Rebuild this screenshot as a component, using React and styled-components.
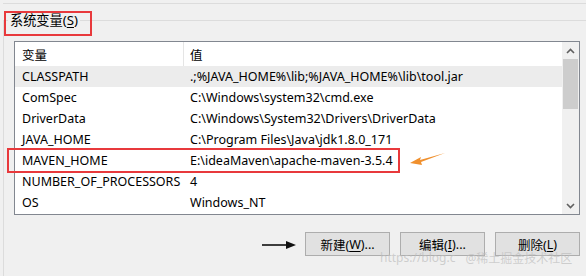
import React from "react";
import styled, { createGlobalStyle } from "styled-components";

const GlobalStyle = createGlobalStyle`
  body {
    margin: 0;
    background: #f0f0f0;
    font-family: "Noto Sans", "Noto Sans CJK SC", sans-serif;
    color: #000;
  }
`;

const Page = styled.div`
  position: relative;
  width: 586px;
  height: 276px;
  overflow: hidden;
  background: #f0f0f0;
  font-size: 12.5px;
`;

const TopRule = styled.div`
  height: 3px;
  border-bottom: 1px solid #dcdcdc;
  margin-left: 3px;
`;

const Group = styled.div`
  margin-top: 16px;
  margin-left: 3px;
  border-top: 1px solid #dcdcdc;
  border-left: 1px solid #dcdcdc;
  padding-left: 10px;
  height: 260px;
`;

const LegendRow = styled.div`
  height: 8px;
`;

const Legend = styled.div`
  display: inline-block;
  margin-top: -9px;
  margin-left: -6px;
  padding: 0 2px;
  background: #f0f0f0;
  line-height: 17px;
  font-size: 13.2px;
  vertical-align: top;
`;

const U = styled.span`
  text-decoration: underline;
  text-underline-offset: 2px;
`;

const ListBox = styled.div`
  display: flex;
  margin-top: 12px;
  width: 564px;
  height: 172px;
  border: 1px solid #828790;
  background: #fff;
`;

const Table = styled.div`
  flex: 1;
  display: flex;
  flex-direction: column;
`;

const Row = styled.div`
  display: grid;
  grid-template-columns: 169px 1fr;
  height: ${(p) => (p.$header ? "24px" : "21px")};
  align-items: center;
  background: ${(p) => (p.$selected ? "#ececec" : "#fff")};
  white-space: nowrap;
  overflow: hidden;
`;

const Cell = styled.div`
  padding-left: ${(p) => (p.$first ? "7px" : "6px")};
  border-right: ${(p) => (p.$divider ? "1px solid #e5e5e5" : "none")};
  height: 100%;
  display: flex;
  align-items: center;
`;

const Scrollbar = styled.div`
  width: 17px;
  display: flex;
  flex-direction: column;
  background: #f0f0f0;
`;

const ArrowBtn = styled.div`
  height: 17px;
  display: flex;
  align-items: center;
  justify-content: center;
`;

const Thumb = styled.div`
  height: 50px;
  margin: 0 1px;
  background: #cdcdcd;
`;

const Track = styled.div`
  flex: 1;
`;

const ButtonRow = styled.div`
  display: flex;
  justify-content: flex-end;
  align-items: center;
  gap: 10px;
  width: 566px;
  margin-top: 17px;
`;

const Button = styled.div`
  width: 83px;
  height: 22px;
  border: 1px solid #adadad;
  background: #e1e1e1;
  display: flex;
  align-items: center;
  justify-content: center;
  font-size: 12.5px;
`;

const Mark = styled.div`
  position: absolute;
  left: ${(p) => p.$x}px;
  top: ${(p) => p.$y}px;
  width: ${(p) => p.$w}px;
  height: ${(p) => p.$h}px;
  border: 2px solid #e8393c;
  box-sizing: border-box;
  pointer-events: none;
`;

const Arrow = styled.svg`
  position: absolute;
  left: ${(p) => p.$x}px;
  top: ${(p) => p.$y}px;
`;

const Watermark = styled.div`
  position: absolute;
  left: 380px;
  top: 249px;
  font-size: 12px;
  color: rgba(190, 190, 190, 0.7);
  white-space: nowrap;
  display: flex;
  gap: 10px;
  pointer-events: none;
`;

const rows = [
  ["CLASSPATH", ".;%JAVA_HOME%\\lib;%JAVA_HOME%\\lib\\tool.jar"],
  ["ComSpec", "C:\\Windows\\system32\\cmd.exe"],
  ["DriverData", "C:\\Windows\\System32\\Drivers\\DriverData"],
  ["JAVA_HOME", "C:\\Program Files\\Java\\jdk1.8.0_171"],
  ["MAVEN_HOME", "E:\\ideaMaven\\apache-maven-3.5.4"],
  ["NUMBER_OF_PROCESSORS", "4"],
  ["OS", "Windows_NT"],
];

export default function App() {
  return (
    <Page>
      <GlobalStyle />
      <TopRule />
      <Group>
        <LegendRow>
          <Legend>
            系统变量(<U>S</U>)
          </Legend>
        </LegendRow>
        <ListBox>
          <Table>
            <Row $header>
              <Cell $first $divider>变量</Cell>
              <Cell>值</Cell>
            </Row>
            {rows.map(([k, v], i) => (
              <Row key={k} $selected={i === 0}>
                <Cell $first>{k}</Cell>
                <Cell>{v}</Cell>
              </Row>
            ))}
          </Table>
          <Scrollbar>
            <ArrowBtn>
              <svg width="9" height="6" viewBox="0 0 9 6">
                <path d="M1 5 L4.5 1.5 L8 5" fill="none" stroke="#606060" strokeWidth="1.6" />
              </svg>
            </ArrowBtn>
            <Thumb />
            <Track />
            <ArrowBtn>
              <svg width="9" height="6" viewBox="0 0 9 6">
                <path d="M1 1 L4.5 4.5 L8 1" fill="none" stroke="#606060" strokeWidth="1.6" />
              </svg>
            </ArrowBtn>
          </Scrollbar>
        </ListBox>
        <ButtonRow>
          <Button>
            新建(<U>W</U>)...
          </Button>
          <Button>
            编辑(<U>I</U>)...
          </Button>
          <Button>
            删除(<U>L</U>)
          </Button>
        </ButtonRow>
      </Group>

      <Mark $x={4} $y={11} $w={88} $h={25} />
      <Mark $x={7} $y={148} $w={393} $h={25} />
      <Arrow $x={408} $y={150} width="40" height="18" viewBox="0 0 40 18">
        <path d="M37 3 L12 10 L13 7 L2 13 L14 15 L13 12 Z" fill="#f0902e" />
      </Arrow>
      <Arrow $x={260} $y={239} width="40" height="12" viewBox="0 0 40 12">
        <path d="M2 6 L28 6" stroke="#111" strokeWidth="1.6" />
        <path d="M26 2 L36 6 L26 10 Z" fill="#111" />
      </Arrow>
      <Watermark>
        <span>https://blog.c</span>
        <span>@稀土掘金技术社区</span>
      </Watermark>
    </Page>
  );
}
